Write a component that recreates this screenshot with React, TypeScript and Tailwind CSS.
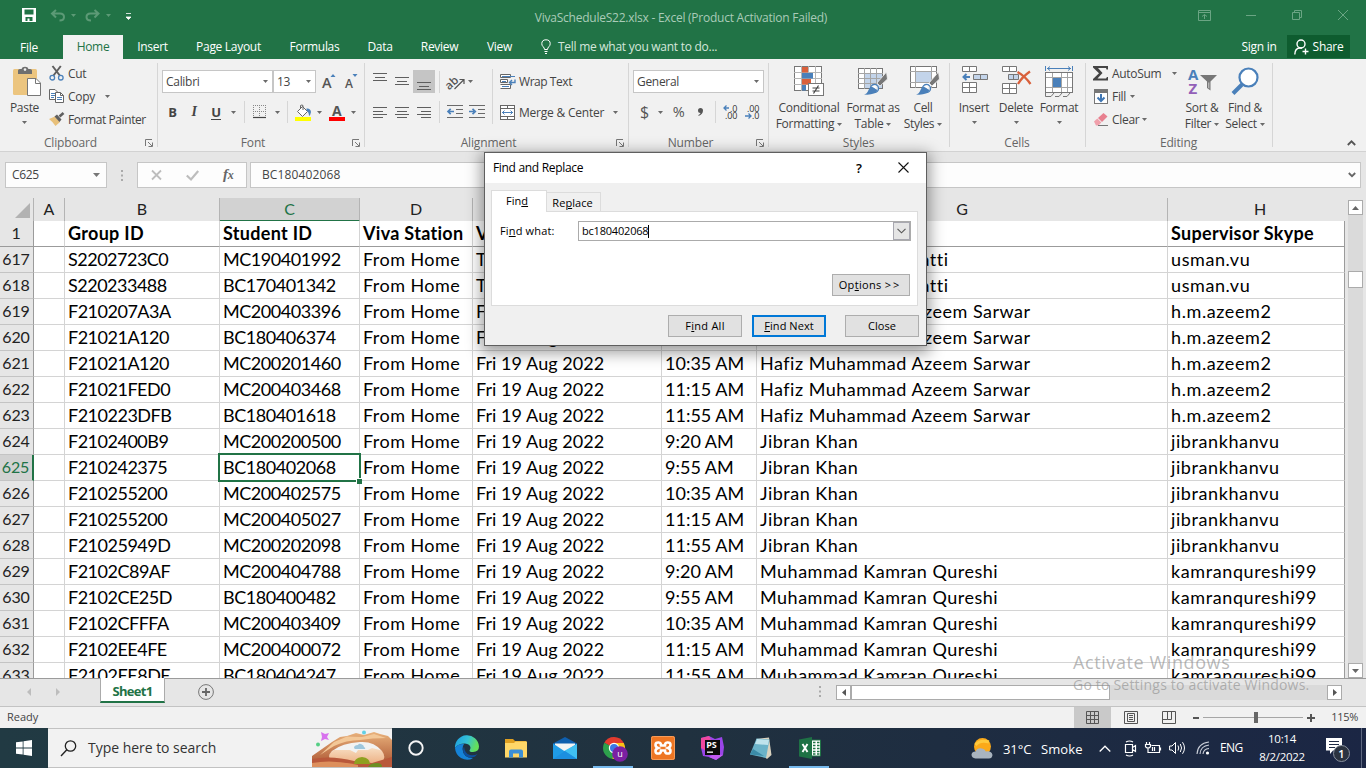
import React from "react";

type Kids = { children?: React.ReactNode };

/* ---------- small shared pieces ---------- */

const Svg = ({ w, h, className = "", children }: Kids & { w: number; h: number; className?: string }) => (
  <svg width={w} height={h} viewBox={`0 0 ${w} ${h}`} className={`block shrink-0 overflow-visible tracking-normal ${className}`} fill="none">
    {children}
  </svg>
);

const Caret = ({ className = "" }: { className?: string }) => (
  <Svg w={5} h={3} className={className}>
    <path d="M0 0H5L2.500 3Z" fill="#6a6a6a" />
  </Svg>
);

const Lines = ({ rows, sel = false }: { rows: [number, number, number][]; sel?: boolean }) => (
  <span className={`flex h-[23px] w-[22px] items-center justify-center ${sel ? "bg-[#c5c5c5]" : ""}`}>
    <Svg w={14} h={19}>
      {rows.map(([x, y, w], i) => (
        <rect key={i} x={x} y={y} width={w} height="1" fill="#5f5f5f" />
      ))}
    </Svg>
  </span>
);

const VSep = ({ className = "h-[22px]" }: { className?: string }) => (
  <span className={`w-px shrink-0 bg-[#d6d6d6] ${className}`} />
);

const Launcher = () => (
  <Svg w={8} h={8}>
    <path d="M.5 7V.5H7M3 3L7 7M7.500 3.500V7.500H3.500" stroke="#777" />
  </Svg>
);

const Group = ({ label, width, launcher, children }: Kids & { label: string; width: string; launcher?: boolean }) => (
  <section className={`flex h-[92px] shrink-0 ${width}`}>
    <div className="flex min-w-0 grow flex-col">
      <div className="flex h-[75px]">{children}</div>
      <div className="flex h-[17px] items-center pt-px">
        <span className={`grow text-center tracking-[-0.15px] text-[#666] ${launcher ? "pr-[4px]" : "pr-px"}`}>{label}</span>
        {launcher && (
          <span className="w-3">
            <Launcher />
          </span>
        )}
      </div>
    </div>
    <VSep className="mt-1 h-[84px]" />
  </section>
);

const Big = ({ width, icon, a, b }: { width: string; icon: React.ReactNode; a: string; b?: string }) => (
  <div className={`flex shrink-0 flex-col items-center whitespace-nowrap ${width}`}>
    <div className="flex h-[41px] items-center pt-[4px]">{icon}</div>
    <span className="h-4 leading-4">{a}</span>
    <span className={`flex h-4 items-center gap-[3px] leading-4 ${b ? "" : "pb-[3px]"}`}>
      {b}
      <Caret />
    </span>
  </div>
);

/* ---------- ribbon icons ---------- */

const PasteIcon = () => (
  <Svg w={30} h={31} className="ml-[4px]">
    <rect x="1" y="3" width="24" height="26" rx="1.5" fill="#ecc57f" />
    <path d="M6 8V4.500Q6 3 8 3H9.500Q10 .8 13 .8Q16 .8 16.500 3H18Q20 3 20 4.500V8Z" fill="#6f6f6f" />
    <circle cx="13" cy="3.600" r="1.300" fill="#f1f1f1" />
    <path d="M15.500 12.500H24L28.500 17V29.500H15.500Z" fill="#fff" stroke="#777" />
    <path d="M23.500 12.500V17.500H28.500" stroke="#777" />
  </Svg>
);

const CutIcon = () => (
  <Svg w={16} h={15}>
    <path d="M3.500 0L10.800 9.500M11.800 0L4.500 9.500" stroke="#5f5f5f" strokeWidth="2" />
    <circle cx="3.300" cy="11.700" r="2.300" stroke="#4a80ba" strokeWidth="1.300" />
    <circle cx="11.800" cy="11.700" r="2.300" stroke="#4a80ba" strokeWidth="1.300" />
  </Svg>
);

const CopyIcon = () => (
  <Svg w={16} h={15}>
    <path d="M.5.500H6L8.500 3V10.500H.500Z" fill="#fff" stroke="#666" />
    <path d="M2 4.500H6M2 6.500H6M2 8.500H5" stroke="#4a80ba" />
    <path d="M6.500 3.500H11.500L14.500 6.500V13.500H6.500Z" fill="#fff" stroke="#666" />
    <path d="M11.500 3.500V6.500H14.500" stroke="#666" />
    <path d="M8 8.500H13M8 10.500H13" stroke="#4a80ba" />
  </Svg>
);

const PainterIcon = () => (
  <Svg w={16} h={15}>
    <path d="M0 7L6 4.500L11 10L6.500 14Q4 10 0 7Z" fill="#e8c07a" />
    <path d="M5.500 4.500L8 2.500L12.500 7.500L10.500 10Z" fill="#5f5f5f" />
    <path d="M10.500 4.500L14.500 1" stroke="#5f5f5f" strokeWidth="2.600" />
  </Svg>
);

const CondIcon = () => (
  <Svg w={31} h={31}>
    <rect x=".5" y=".5" width="27" height="24" fill="#fff" stroke="#777" />
    <path d="M7.500 0V25M14.500 0V25M21.500 0V25M0 6.500H28M0 12.500H28M0 18.500H28" stroke="#b5b5b5" />
    <rect x="8" y="1" width="6" height="5.500" fill="#d9603b" />
    <rect x="8" y="7" width="11" height="5.500" fill="#4a80ba" />
    <rect x="8" y="13" width="9" height="5.500" fill="#d9603b" />
    <rect x="8" y="19" width="4" height="5.500" fill="#4a80ba" />
    <rect x="14.500" y="17.500" width="15" height="12" fill="#fff" stroke="#777" />
    <path d="M18.500 22H25.500M18.500 25H25.500M24.500 19.500L19.500 27.500" stroke="#444" strokeWidth="1.200" />
  </Svg>
);

const Brush = () => (
  <>
    <path d="M28.500 6L29.500 13L22 20L19 17Z" fill="#777" stroke="#f1f1f1" strokeWidth=".8" />
    <circle cx="16.500" cy="22.500" r="4" fill="#f1f1f1" stroke="#4a80ba" strokeWidth="1.400" />
    <path d="M6 28.500Q9 28 10.500 24Q12 20 16 20Q17 23 19.500 24Q17 29.500 6 28.500Z" fill="#4a80ba" />
    <path d="M13.500 20.500L17.500 19L18 23Z" fill="#fff" />
  </>
);

const TableIcon = () => (
  <Svg w={30} h={31}>
    <rect x=".5" y="2.500" width="24" height="20" fill="#fff" stroke="#777" />
    <rect x="7" y="8" width="17" height="14" fill="#c3d4ea" />
    <path d="M6.500 2V23M12.500 2V23M18.500 2V23M0 7.500H25M0 12.500H25M0 17.500H25" stroke="#a5a5a5" />
    <Brush />
  </Svg>
);

const CellStyleIcon = () => (
  <Svg w={30} h={31} className="ml-[4px]">
    <rect x=".5" y=".5" width="26" height="21" fill="#fff" stroke="#777" />
    <path d="M5.500 0V22M21.500 0V22M0 5.500H27M0 16.500H27" stroke="#a5a5a5" />
    <rect x="6" y="6" width="15" height="10" fill="#c3d4ea" />
    <Brush />
  </Svg>
);

const InsertIcon = () => (
  <Svg w={27} h={31}>
    <path d="M1.500.500H15.500V5.500H1.500ZM8.500.500V5.500" fill="#fff" stroke="#777" />
    <path d="M12.500 8.500H26.500V13.500H12.500Z" fill="#c3d4ea" stroke="#777" />
    <path d="M19.500 8.500V13.500" stroke="#777" />
    <path d="M9 11H3M5.500 8L2.500 11L5.500 14" stroke="#4a80ba" strokeWidth="2" />
    <path d="M1.500 16.500H15.500V26.500H1.500ZM8.500 16.500V26.500M1.500 21.500H15.500" fill="#fff" stroke="#777" />
  </Svg>
);

const DeleteIcon = () => (
  <Svg w={30} h={31}>
    <path d="M1.500.500H15.500V5.500H1.500ZM8.500.500V5.500" fill="#fff" stroke="#777" />
    <path d="M7.500 8.500H17.500V13.500H7.500Z" fill="#c3d4ea" stroke="#777" />
    <path d="M12.500 8.500V13.500" stroke="#777" />
    <path d="M1.500 17.500H15.500V27.500H1.500ZM8.500 17.500V27.500M1.500 22.500H15.500" fill="#fff" stroke="#777" />
    <path d="M16.500 6Q24 10 29.500 18M29 5.500Q21 11 17 18" stroke="#d9603b" strokeWidth="2.300" />
  </Svg>
);

const FormatIcon = () => (
  <Svg w={30} h={32}>
    <path d="M1.500 0V5M28.500 0V5M3 2.500H27M6 .5L3.500 2.500L6 4.500M24 .5L26.500 2.500L24 4.500" stroke="#4a80ba" />
    <rect x="1.500" y="6.500" width="27" height="20" fill="#fff" stroke="#777" />
    <path d="M8.500 7V26M17.500 7V26M23.500 7V26M2 11.500H28M2 21.500H28" stroke="#a5a5a5" />
    <rect x="9" y="12" width="8" height="9" fill="#4a80ba" />
    <path d="M1.500 26.500V30.500H7L10 27M11 30.500H15L18 27M19 30.500H23L26 27" stroke="#777" />
  </Svg>
);

const SortIcon = () => (
  <Svg w={30} h={30} className="ml-[2px]">
    <text x="0" y="12.500" fontFamily="Open Sans" fontWeight="700" fontSize="15" fill="#4a80ba">A</text>
    <text x="0.500" y="26.500" fontFamily="Open Sans" fontWeight="700" fontSize="15" fill="#9360b8">Z</text>
    <path d="M12 8H29L22.500 14.500V23.500L19 21V14.500Z" fill="#777" />
    <path d="M20.500 15.500V21L21.200 21.500V15.500Z" fill="#f1f1f1" />
  </Svg>
);

const FindIcon = () => (
  <Svg w={29} h={30}>
    <path d="M2 26.500L11 17.500" stroke="#4a80ba" strokeWidth="4" />
    <circle cx="17.500" cy="10.500" r="9" fill="#fff" stroke="#4a80ba" strokeWidth="2.200" />
  </Svg>
);

const Indent = ({ right = false }: { right?: boolean }) => (
  <Svg w={16} h={14}>
    <path d="M0 .5H16M9 4.500H16M9 8.500H16M0 12.500H16" stroke="#6a6a6a" />
    {right ? (
      <path d="M0 6.500H5M3.500 3.800L6.300 6.500L3.500 9.200" stroke="#4a80ba" strokeWidth="1.700" />
    ) : (
      <path d="M2 6.500H7M3.700 3.800L1 6.500L3.700 9.200" stroke="#4a80ba" strokeWidth="1.700" />
    )}
  </Svg>
);

const Combo = ({ text, width, h = "h-[23px]" }: { text: string; width: string; h?: string }) => (
  <div className={`flex shrink-0 items-center justify-between border border-[#c6c6c6] bg-white pr-[4px] pl-[3px] ${width} ${h}`}>
    <span>{text}</span>
    <Caret />
  </div>
);

/* ---------- title + tabs ---------- */

const TitleBar = () => (
  <header className="flex h-[35px] items-center bg-[#217346]">
    <Svg w={14} h={14} className="mt-[-5px] ml-[22px]">
      <path fillRule="evenodd" d="M0 0H14V14H0ZM2.500 1.500V6.500H11.500V1.500ZM3.500 9V13H5.500V10.500H7.500V13H10.500V9Z" fill="#fff" />
    </Svg>
    <Svg w={15} h={13} className="mt-[-5px] ml-[14px]">
      <path d="M6 1L2 4.500L6 8.500M2 4.500H10Q14 4.500 14 8Q14 11.500 9.500 11.500" stroke="#5c9a76" strokeWidth="2" />
    </Svg>
    <Svg w={5} h={3} className="mt-[-5px] ml-[6px]"><path d="M0 0H5L2.500 3Z" fill="#5c9a76" /></Svg>
    <Svg w={15} h={13} className="mt-[-5px] ml-[9px]">
      <path d="M9.500 1L13.500 4.500L9.500 8.500M13.500 4.500H5.500Q1.500 4.500 1.500 8Q1.500 11.500 6 11.500" stroke="#5c9a76" strokeWidth="2" />
    </Svg>
    <Svg w={5} h={3} className="mt-[-5px] ml-[6px]"><path d="M0 0H5L2.500 3Z" fill="#5c9a76" /></Svg>
    <Svg w={5} h={7} className="mt-[-2px] ml-[15px]"><path d="M0 .5H5M0 4H5L2.500 6.500Z" fill="#fff" stroke="#fff" strokeWidth=".8" /></Svg>
    <span className="ml-[402px] w-[296px] text-center whitespace-nowrap text-[#a9cbb8] tracking-[-0.24px]">
      VivaScheduleS22.xlsx - Excel (Product Activation Failed)
    </span>
    <Svg w={13} h={11} className="mt-[-5px] ml-[369px]">
      <path d="M.5.500H12.500V10.500H.500ZM.500 2.500H12.500M6.500 9V4.500M4 6.500L6.500 4.500L9 6.500" stroke="#6ba584" />
    </Svg>
    <Svg w={10} h={1} className="mt-[-5px] ml-[35px]"><path d="M0 .5H10" stroke="#6ba584" /></Svg>
    <Svg w={10} h={10} className="mt-[-5px] ml-[36px]"><path d="M.5 2.500H7.500V9.500H.500ZM2.500 2.500V.500H9.500V7.500H7.500" stroke="#6ba584" /></Svg>
    <Svg w={10} h={10} className="mt-[-5px] ml-[36px]"><path d="M0 0L10 10M10 0L0 10" stroke="#6ba584" /></Svg>
  </header>
);

const Tab = ({ t, w, on = false }: { t: string; w: string; on?: boolean }) => (
  <span className={`flex shrink-0 items-center justify-center ${w} ${on ? "bg-[#f1f1f1] text-[#217346]" : "text-white"}`}>{t}</span>
);

const TabBar = () => (
  <nav className="flex h-6 bg-[#217346] whitespace-nowrap">
    <Tab t="File" w="w-[58px] mr-[5px] pt-px" />
    <Tab t="Home" w="w-[60px]" on />
    <Tab t="Insert" w="w-[59px]" />
    <Tab t="Page Layout" w="w-[93px]" />
    <Tab t="Formulas" w="w-[79px]" />
    <Tab t="Data" w="w-[52px]" />
    <Tab t="Review" w="w-[67px]" />
    <Tab t="View" w="w-[53px]" />
    <Svg w={10} h={15} className="mt-[4px] ml-[15px]">
      <path d="M3.500 10.500Q3.500 9 2 7.500Q.8 6.500.8 4.700Q.8.800 5 .8Q9.200.800 9.200 4.700Q9.200 6.500 8 7.500Q6.500 9 6.500 10.500ZM3.500 12.500H6.500M4 14.500H6" stroke="#fff" />
    </Svg>
    <span className="ml-[7px] self-center text-[#d5e7dc] tracking-[-0.27px]">Tell me what you want to do...</span>
    <span className="ml-auto w-[36px] self-center text-center text-white">Sign in</span>
    <span className="mr-[16px] ml-[10px] flex h-[23px] w-[63px] items-center justify-center gap-[4px] bg-[#0e5c2f] text-white">
      <Svg w={15} h={16}>
        <circle cx="7" cy="5" r="4" stroke="#fff" strokeWidth="1.400" />
        <path d="M.8 15.500Q1 9 6 9H8M11.500 9.500V15.500M8.500 12.500H14.500" stroke="#fff" strokeWidth="1.400" />
      </Svg>
      Share
    </span>
  </nav>
);

/* ---------- ribbon ---------- */

const Small = ({ icon, children }: Kids & { icon: React.ReactNode }) => (
  <div className="flex h-[23px] items-center whitespace-nowrap">
    <span className="w-[19px] shrink-0">{icon}</span>
    {children}
  </div>
);

const Box = ({ w, children }: Kids & { w: string }) => <span className={`flex shrink-0 items-center justify-center ${w}`}>{children}</span>;

const Ribbon = () => (
  <div className="flex h-[93px] border-b border-[#d2d2d2] bg-[#f1f1f1] text-[#444]">
    <Group label="Clipboard" width="w-[158px]" launcher>
      <Big width="w-[49px]" icon={<PasteIcon />} a="Paste" />
      <div className="flex flex-col pt-[3px]">
        <Small icon={<CutIcon />}>Cut</Small>
        <Small icon={<CopyIcon />}>Copy<Caret className="ml-[10px]" /></Small>
        <Small icon={<PainterIcon />}><span className="tracking-[-0.42px]">Format Painter</span></Small>
      </div>
    </Group>

    <Group label="Font" width="w-[207px]" launcher>
      <div className="flex flex-col gap-[8px] pt-[11px] pl-[4px]">
        <div className="flex h-[23px]">
          <Combo text="Calibri" width="w-[111px]" />
          <Combo text="13" width="w-[43px]" />
          <Box w="w-[26px]">
            <Svg w={14} h={15}>
              <text x="0" y="13.500" fontFamily="Open Sans" fontWeight="600" fontSize="14.500" fill="#555">A</text>
              <path d="M8.500 3H13.500L11 0Z" fill="#4a80ba" />
            </Svg>
          </Box>
          <Box w="w-[18px]">
            <Svg w={13} h={15}>
              <text x="0" y="13.500" fontFamily="Open Sans" fontWeight="600" fontSize="12" fill="#555">A</text>
              <path d="M7.500 0H12.500L10 3Z" fill="#4a80ba" />
            </Svg>
          </Box>
        </div>
        <div className="flex h-[22px] items-center text-[#444]">
          <Box w="w-[21px]"><b className="text-[13px]">B</b></Box>
          <Box w="w-[22px]"><i className="font-['Liberation_Serif',serif] text-[14px] font-bold">I</i></Box>
          <Box w="w-[22px]"><b className="border-b border-[#444] text-[13px] leading-[14px]">U</b></Box>
          <Box w="w-[13px]"><Caret /></Box>
          <VSep className="ml-[4px] h-[22px]" />
          <Box w="w-[30px]">
            <Svg w={14} h={14}>
              <path d="M.5 0V12M6.500 0V12M12.500 0V12M0 .5H13M0 6.500H13" stroke="#888" strokeDasharray="1 1" />
              <path d="M0 12.500H13" stroke="#444" strokeWidth="1.200" />
            </Svg>
          </Box>
          <Box w="w-[5px]"><Caret /></Box>
          <VSep className="ml-[7px] h-[22px]" />
          <Box w="w-[31px]">
            <Svg w={17} h={17}>
              <path d="M2.500 7.500L7.500 2.500L12.500 7.500L7.500 12.500Z" fill="#fff" stroke="#666" />
              <path d="M5.500 5V1.500Q7 .5 8 1.500V6" stroke="#666" />
              <path d="M11.500 4.500Q15.500 4 16 8Q15.500 11 14 12Q14 8 11.500 6.500Z" fill="#4a80ba" />
              <rect x="0" y="13" width="16" height="4" fill="#ff0" />
            </Svg>
          </Box>
          <Caret className="-ml-[2px] mr-[1px]" />
          <Box w="w-[28px]">
            <Svg w={16} h={17} className="ml-[-1px]">
              <text x="3" y="12" fontFamily="Open Sans" fontWeight="700" fontSize="14" fill="#555">A</text>
              <rect x="0" y="13" width="16" height="4" fill="red" />
            </Svg>
          </Box>
          <Caret />
        </div>
      </div>
    </Group>

    <Group label="Alignment" width="w-[264px]" launcher>
      <div className="flex w-[127px] flex-col gap-[8px] pt-[11px] pl-[4px]">
        <div className="flex h-[23px] items-center">
          <Lines rows={[[0, 1, 14], [2, 5, 10], [0, 8, 14]]} />
          <Lines rows={[[0, 5, 14], [2, 9, 10], [0, 12, 14]]} />
          <Lines sel rows={[[0, 10, 14], [2, 14, 10], [0, 17, 14]]} />
          <VSep className="ml-[4px] h-[22px]" />
          <Box w="w-[33px]">
            <Svg w={18} h={16}>
              <text x="-3" y="12" transform="rotate(-42 5 9)" fontFamily="Open Sans" fontWeight="600" fontSize="11.500" fill="#555">ab</text>
              <path d="M6.500 15L15.500 6M11.500 5.500H16V10" stroke="#555" strokeWidth="1.200" />
            </Svg>
          </Box>
          <Caret className="ml-[-5px]" />
        </div>
        <div className="flex h-[22px] items-center">
          <Lines rows={[[0, 4, 14], [0, 8, 10], [0, 11, 14], [0, 14, 10]]} />
          <Lines rows={[[0, 4, 14], [2, 8, 10], [0, 11, 14], [2, 14, 10]]} />
          <Lines rows={[[0, 4, 14], [4, 8, 10], [0, 11, 14], [4, 14, 10]]} />
          <VSep className="ml-[4px] h-[22px]" />
          <Box w="w-[30px]"><Indent /></Box>
          <Box w="w-[14px]"><Indent right /></Box>
        </div>
      </div>
      <VSep className="mt-[10px] h-[55px]" />
      <div className="flex flex-col gap-[8px] pt-[11px] pl-[7px] whitespace-nowrap">
        <div className="flex h-[23px] items-center gap-[3px]">
          <Svg w={16} h={16}>
            <path d="M.5.500H10.500V3.500H.500ZM.500 5.500H7.500V8.500H.500ZM.500 10.500H10.500V14.500H.500" stroke="#666" fill="#fff" />
            <path d="M2 2.500H15M2 7.500H6M2 12.500H9" stroke="#4a80ba" />
            <path d="M15 5.500V8.500H10M12 6L9.500 8.500L12 11" stroke="#4a80ba" strokeWidth="1.400" />
          </Svg>
          <span className="tracking-[-0.45px]">Wrap Text</span>
        </div>
        <div className="flex h-[22px] items-center gap-[3px]">
          <Svg w={16} h={15}>
            <rect x=".5" y=".5" width="14" height="14" fill="#fff" stroke="#666" />
            <path d="M0 3.500H15M0 11.500H15M7.500 0V3.500M7.500 11.500V15" stroke="#666" />
            <path d="M2 7.500H13M4.500 5.500L2.500 7.500L4.500 9.500M10.500 5.500L12.500 7.500L10.500 9.500" stroke="#4a80ba" />
          </Svg>
          <span className="pt-[2px] tracking-[-0.22px]">Merge &amp; Center</span>
          <Caret className="ml-[6px]" />
        </div>
      </div>
    </Group>

    <Group label="Number" width="w-[140px]" launcher>
      <div className="flex flex-col gap-[8px] pt-[11px] pl-[4px]">
        <Combo text="General" width="w-[131px]" />
        <div className="flex h-[22px] items-center text-[#555]">
          <Box w="w-[23px]"><span className="text-[16px]">$</span></Box>
          <Box w="w-[9px]"><Caret /></Box>
          <Box w="w-[27px]"><span className="text-[14.500px]">%</span></Box>
          <Box w="w-[16px]">
            <Svg w={5} h={8}><path d="M0 2.500A2.500 2.500 0 0 1 5 2.500Q5 6 .5 8V7Q2.500 6 2.500 5A2.500 2.500 0 0 1 0 2.500Z" fill="#555" /></Svg>
          </Box>
          <VSep className="ml-[7px] h-[22px]" />
          <Svg w={16} h={15} className="ml-[7px]">
            <path d="M6 3H1M3.500.500L1 3L3.500 5.500" stroke="#4a80ba" strokeWidth="1.300" />
            <text x="7" y="6.500" fontFamily="Open Sans" fontSize="9" textLength="7.500" fill="#333">.0</text>
            <text x="2" y="14" fontFamily="Open Sans" fontSize="9" textLength="12.500" fill="#333">.00</text>
          </Svg>
          <Svg w={16} h={15} className="ml-[6px]">
            <text x="2" y="6.500" fontFamily="Open Sans" fontSize="9" textLength="12.500" fill="#333">.00</text>
            <path d="M0 11H6M3.500 8.500L6 11L3.500 13.500" stroke="#4a80ba" strokeWidth="1.300" />
            <text x="7" y="14" fontFamily="Open Sans" fontSize="9" textLength="7.500" fill="#333">.0</text>
          </Svg>
        </div>
      </div>
    </Group>

    <Group label="Styles" width="w-[181px]">
      <Big width="w-[80px]" icon={<CondIcon />} a="Conditional" b="Formatting" />
      <Big width="w-[48px]" icon={<TableIcon />} a="Format as" b="Table" />
      <Big width="w-[52px]" icon={<CellStyleIcon />} a="Cell" b="Styles" />
    </Group>

    <Group label="Cells" width="w-[136px]">
      <Big width="w-[48px]" icon={<InsertIcon />} a="Insert" />
      <Big width="w-[36px]" icon={<DeleteIcon />} a="Delete" />
      <Big width="w-[50px]" icon={<FormatIcon />} a="Format" />
    </Group>

    <Group label="Editing" width="w-[187px]">
      <div className="flex w-[94px] flex-col pt-[3px] pl-[7px]">
        <Small icon={<Svg w={15} h={15}><path d="M0 0H15V3.500H13.500L13 2H5L9.500 7L4.500 12.500H13L14 11H15V14.500H0V13L6 7.200L0 1.500Z" fill="#444" /></Svg>}>
          AutoSum<Caret className="ml-[11px]" />
        </Small>
        <Small icon={<Svg w={15} h={15} className="ml-px"><rect x=".5" y=".5" width="13" height="14" fill="#fff" stroke="#777" /><path d="M0 0H14V4H0Z" fill="#777" /><path d="M7 5V12M3.500 8.500L7 12L10.500 8.500" stroke="#3f76b3" strokeWidth="2" /></Svg>}>
          Fill<Caret className="ml-[4px]" />
        </Small>
        <Small icon={<Svg w={15} h={14} className="ml-px"><path d="M4 5L9.500 0L13.500 3.500L8 9Z" fill="#e8808f" /><path d="M0 8.500L3.300 5.500L7.300 9.500L4.500 12.500H2Z" fill="#f0a0ab" /><path d="M4 12.500H14" stroke="#777" /></Svg>}>
          Clear<Caret className="ml-[3px]" />
        </Small>
      </div>
      <Big width="w-[44px]" icon={<SortIcon />} a="Sort &amp;" b="Filter" />
      <Big width="w-[42px]" icon={<FindIcon />} a="Find &amp;" b="Select" />
    </Group>

    <Svg w={9} h={6} className="mt-[81px] ml-[74px]"><path d="M.8 5L4.500 1.300L8.200 5" stroke="#555" strokeWidth="1.800" /></Svg>
  </div>
);

/* ---------- formula bar ---------- */

const Dots = ({ className = "" }: { className?: string }) => (
  <Svg w={2} h={11} className={className}><path d="M0 0H2V2H0ZM0 4.500H2V6.500H0ZM0 9H2V11H0Z" fill="#aaa" /></Svg>
);

const FormulaBar = () => (
  <div className="flex h-[46px] items-center bg-[#e6e6e6] pl-[5px] text-[#444]">
    <div className="flex h-[26px] w-[102px] items-center justify-between border border-[#c6c6c6] bg-[#fdfdfd] pr-[6px] pl-[6px]">
      <span className="tracking-[-0.35px]">C625</span>
      <Svg w={7} h={4}><path d="M0 0H7L3.500 4Z" fill="#777" /></Svg>
    </div>
    <Dots className="ml-[14px]" />
    <div className="ml-[14px] flex h-[26px] w-[110px] items-center border border-[#c6c6c6] bg-[#fdfdfd]">
      <Svg w={11} h={10} className="ml-[13px]"><path d="M1 .5L10 9.500M10 .5L1 9.500" stroke="#bdbdbd" strokeWidth="1.800" /></Svg>
      <Svg w={13} h={11} className="ml-[24px]"><path d="M.8 5.500L5 9.500L12.200 1" stroke="#bdbdbd" strokeWidth="2.200" /></Svg>
      <i className="ml-[24px] font-['Liberation_Serif',serif] text-[15px] font-bold text-[#666]">f<span className="text-[12px]">x</span></i>
    </div>
    <div className="ml-[3px] flex h-[26px] w-[1111px] items-center border border-[#c6c6c6] bg-[#fdfdfd] pr-[4px] pl-[11px]">
      <span className="tracking-[0.12px]">BC180402068</span>
      <Svg w={8} h={6} className="ml-auto"><path d="M.8 1L4 4.200L7.200 1" stroke="#666" strokeWidth="1.800" /></Svg>
    </div>
  </div>
);

/* ---------- sheet ---------- */

const cols = "grid grid-cols-[34px_31px_155px_140px_113px_189px_95px_411px_177px]";

const data: string[][] = [
  ["617", "", "S2202723C0", "MC190401992", "From Home", "Thu 18 Aug 2022", "", "Bhatti", "usman.vu"],
  ["618", "", "S220233488", "BC170401342", "From Home", "Thu 18 Aug 2022", "", "Bhatti", "usman.vu"],
  ["619", "", "F210207A3A", "MC200403396", "From Home", "Fri 19 Aug 2022", "9:20 AM", "Hafiz Muhammad Azeem Sarwar", "h.m.azeem2"],
  ["620", "", "F21021A120", "BC180406374", "From Home", "Fri 19 Aug 2022", "9:55 AM", "Hafiz Muhammad Azeem Sarwar", "h.m.azeem2"],
  ["621", "", "F21021A120", "MC200201460", "From Home", "Fri 19 Aug 2022", "10:35 AM", "Hafiz Muhammad Azeem Sarwar", "h.m.azeem2"],
  ["622", "", "F21021FED0", "MC200403468", "From Home", "Fri 19 Aug 2022", "11:15 AM", "Hafiz Muhammad Azeem Sarwar", "h.m.azeem2"],
  ["623", "", "F210223DFB", "BC180401618", "From Home", "Fri 19 Aug 2022", "11:55 AM", "Hafiz Muhammad Azeem Sarwar", "h.m.azeem2"],
  ["624", "", "F2102400B9", "MC200200500", "From Home", "Fri 19 Aug 2022", "9:20 AM", "Jibran Khan", "jibrankhanvu"],
  ["625", "", "F210242375", "BC180402068", "From Home", "Fri 19 Aug 2022", "9:55 AM", "Jibran Khan", "jibrankhanvu"],
  ["626", "", "F210255200", "MC200402575", "From Home", "Fri 19 Aug 2022", "10:35 AM", "Jibran Khan", "jibrankhanvu"],
  ["627", "", "F210255200", "MC200405027", "From Home", "Fri 19 Aug 2022", "11:15 AM", "Jibran Khan", "jibrankhanvu"],
  ["628", "", "F21025949D", "MC200202098", "From Home", "Fri 19 Aug 2022", "11:55 AM", "Jibran Khan", "jibrankhanvu"],
  ["629", "", "F2102C89AF", "MC200404788", "From Home", "Fri 19 Aug 2022", "9:20 AM", "Muhammad Kamran Qureshi", "kamranqureshi99"],
  ["630", "", "F2102CE25D", "BC180400482", "From Home", "Fri 19 Aug 2022", "9:55 AM", "Muhammad Kamran Qureshi", "kamranqureshi99"],
  ["631", "", "F2102CFFFA", "MC200403409", "From Home", "Fri 19 Aug 2022", "10:35 AM", "Muhammad Kamran Qureshi", "kamranqureshi99"],
  ["632", "", "F2102EE4FE", "MC200400072", "From Home", "Fri 19 Aug 2022", "11:15 AM", "Muhammad Kamran Qureshi", "kamranqureshi99"],
  ["633", "", "F2102EE8DE", "BC180404247", "From Home", "Fri 19 Aug 2022", "11:55 AM", "Muhammad Kamran Qureshi", "kamranqureshi99"],
];

const tracks = [
  "",
  "",
  "tracking-[-0.5px]",
  "tracking-[-0.45px]",
  "tracking-[0.45px]",
  "tracking-[0.05px]",
  "tracking-[0px]",
  "tracking-[0.5px]",
  "tracking-[0.6px]",
];

const Row = ({ cells, head = false }: { cells: string[]; head?: boolean }) => {
  const active = cells[0] === "625";
  return (
    <div className={`${cols} h-[26px] shrink-0`}>
      {cells.map((c, i) => {
        if (i === 0)
          return (
            <div
              key={i}
              className={`flex items-center justify-center border-b pr-px font-['Lato','Noto_Sans',sans-serif] text-[16px] tracking-[-0.1px] ${
                active
                  ? "border-r-2 border-r-[#217346] bg-[#d2d2d2] text-[#217346]"
                  : "border-r border-r-[#9b9b9b] bg-[#e6e6e6] text-[#222]"
              } ${head ? "border-b-[#9b9b9b]" : "border-b-[#c4c4c4]"}`}
            >
              {c}
            </div>
          );
        const sel = active && i === 3;
        return (
          <div
            key={i}
            className={`flex items-center border-r border-b bg-white pl-[3px] whitespace-nowrap text-black ${
              head ? "border-b-[#9b9b9b] font-bold tracking-[0.3px]" : `border-b-[#d4d4d4] ${tracks[i]}`
            } ${i === 8 ? "border-r-[#9b9b9b]" : "border-r-[#d4d4d4]"} ${sel ? "relative z-10" : ""}`}
          >
            <span className={c === "Bhatti" ? "ml-[138px]" : ""}>{c}</span>
            {sel && (
              <>
                <span className="absolute -top-[2px] -left-[2px] h-[29px] w-[143px] border-2 border-[#217346]" />
                <span className="absolute -right-[3px] -bottom-[4px] size-[6px] border-t border-l border-white bg-[#217346]" />
              </>
            )}
          </div>
        );
      })}
    </div>
  );
};

const Sheet = () => (
  <div className="flex h-[480px] bg-[#e6e6e6]">
    <div className="flex h-[480px] w-[1345px] flex-col overflow-hidden font-['Lato','Noto_Sans',sans-serif] text-[18px] tracking-normal [font-variant-ligatures:none]">
      <div className={`${cols} h-[23px] shrink-0 text-[16px] text-[#222]`}>
        {["", "A", "B", "C", "D", "E", "F", "G", "H"].map((c, i) => (
          <div
            key={i}
            className={`flex items-center justify-center border-r ${
              i === 3 ? "border-b-2 border-b-[#217346] bg-[#d2d2d2] pt-px text-[#217346]" : "border-b border-b-[#9b9b9b]"
            } ${i === 8 ? "border-r-transparent pl-[8px]" : "border-r-[#b4b4b4]"}`}
          >
            {i === 0 ? <Svg w={15} h={15} className="mt-[2px] ml-[11px]"><path d="M15 0V15H0Z" fill="#b2b2b2" /></Svg> : c}
          </div>
        ))}
      </div>
      <Row head cells={["1", "", "Group ID", "Student ID", "Viva Station", "Viva Date", "Time", "Supervisor", "Supervisor Skype"]} />
      {data.map((r) => (
        <Row key={r[0]} cells={r} />
      ))}
    </div>
    <div className="mt-[2px] ml-[3px] flex h-[478px] w-[15px] flex-col bg-[#dadada]">
      <span className="flex h-[15px] items-center justify-center border border-[#ababab] bg-white"><Svg w={7} h={4}><path d="M0 4H7L3.500 0Z" fill="#666" /></Svg></span>
      <span className="mt-[56px] h-[17px] border border-[#ababab] bg-white" />
      <span className="mt-auto flex h-[15px] items-center justify-center border border-[#ababab] bg-white"><Svg w={7} h={4}><path d="M0 0H7L3.500 4Z" fill="#666" /></Svg></span>
    </div>
  </div>
);

const SheetTabs = () => (
  <div className="flex h-[29px] border-t border-b border-t-[#9b9b9b] border-b-[#c3c3c3] bg-[#e6e6e6]">
    <Svg w={4} h={8} className="mt-[9px] ml-[27px]"><path d="M4 0V8L0 4Z" fill="#bdbdbd" /></Svg>
    <Svg w={4} h={8} className="mt-[9px] ml-[25px]"><path d="M0 0V8L4 4Z" fill="#bdbdbd" /></Svg>
    <div className="-mt-px ml-[40px] flex h-[25px] w-[65px] items-center justify-center border-x border-b-2 border-x-[#ababab] border-b-[#217346] bg-white pt-[3px] text-[13px] font-bold tracking-[-0.65px] text-[#217346]">
      Sheet1
    </div>
    <Svg w={16} h={16} className="mt-[5px] ml-[33px]">
      <circle cx="8" cy="8" r="7.400" stroke="#777" />
      <path d="M8 4V12M4 8H12" stroke="#666" strokeWidth="1.800" />
    </Svg>
    <Dots className="mt-[7px] ml-[605px]" />
    <div className="mt-[6px] ml-[15px] flex h-[15px] w-[506px] bg-[#dadada]">
      <span className="flex w-[15px] items-center justify-center border border-[#ababab] bg-white"><Svg w={4} h={7}><path d="M4 0V7L0 3.500Z" fill="#555" /></Svg></span>
      <span className="w-[259px] border border-[#ababab] bg-white" />
      <span className="ml-auto flex w-[15px] items-center justify-center border border-[#ababab] bg-white"><Svg w={4} h={7}><path d="M0 0V7L4 3.500Z" fill="#555" /></Svg></span>
    </div>
  </div>
);

const StatusBar = () => (
  <div className="flex h-[21px] items-center bg-[#f1f1f1] text-[11px] text-[#444]">
    <span className="ml-[7px] tracking-[0px]">Ready</span>
    <div className="ml-auto flex h-[21px] w-[37px] items-center justify-center bg-[#c9c9c9]">
      <Svg w={13} h={13}><path d="M.5.500H12.500V12.500H.500ZM4.500 0V13M8.500 0V13M0 4.500H13M0 8.500H13" stroke="#555" /></Svg>
    </div>
    <Svg w={14} h={13} className="ml-[13px]"><path d="M.5.500H13.500V12.500H.500ZM3.500 2.500H10.500V10.500H3.500ZM5 4.500H9M5 6.500H9M5 8.500H9" stroke="#555" /></Svg>
    <Svg w={14} h={13} className="ml-[24px]"><path d="M.5.500H13.500V12.500H.500ZM5.500 0V8.500H9.500M.5 8.500H5.500M9.500 0V8.500" stroke="#555" /></Svg>
    <span className="ml-[17px] h-[2px] w-[6px] bg-[#555]" />
    <span className="ml-[4px] flex h-[11px] w-[100px] items-center"><span className="h-px w-[51px] bg-[#a6a6a6]" /><span className="h-[11px] w-[4px] bg-[#666]" /><span className="h-px grow bg-[#a6a6a6]" /></span>
    <Svg w={8} h={8} className="ml-[4px]"><path d="M4 0V8M0 4H8" stroke="#555" strokeWidth="2" /></Svg>
    <span className="mr-[8px] ml-[16px] w-[27px] text-right tracking-[-0.3px]">115%</span>
  </div>
);

/* ---------- dialog ---------- */

const Btn = ({ children, className = "" }: Kids & { className?: string }) => (
  <span className={`flex h-[22px] items-center justify-center bg-[#e1e1e1] ${className}`}>{children}</span>
);

const Dialog = () => (
  <div className="absolute top-[152px] left-[484px] z-20 flex h-[194px] w-[443px] flex-col border border-[#5f5f5f] bg-[#f0f0f0] text-[11px] tracking-[0.05px] text-black shadow-[0_4px_14px_3px_rgba(0,0,0,0.38)]">
    <div className="flex h-[30px] shrink-0 items-center bg-white pl-[8px]">
      <span className="grow text-[12px] tracking-[-0.32px]">Find and Replace</span>
      <span className="mr-[36px] text-[13px] font-semibold">?</span>
      <Svg w={11} h={11} className="mt-[-2px] mr-[17px]"><path d="M.5.500L10.500 10.500M10.500.500L.5 10.500" stroke="#111" strokeWidth="1.100" /></Svg>
    </div>
    <div className="flex h-[28px] shrink-0 items-end pl-[6px]">
      <span className="relative z-10 -mb-px flex h-[22px] w-[56px] items-center justify-center border border-b-0 border-[#dcdcdc] bg-white pr-[4px]">
        <span>Fin<u>d</u></span>
      </span>
      <span className="flex h-[19px] w-[54px] items-center justify-center border border-b-0 border-l-0 border-[#dcdcdc] bg-[#f0f0f0] pt-[2px] pr-[2px]">
        <span>Re<u>p</u>lace</span>
      </span>
    </div>
    <div className="ml-[6px] flex h-[95px] w-[427px] shrink-0 flex-col border border-[#dcdcdc] bg-white pt-[9px] pl-[8px]">
      <div className="flex h-[20px] items-center">
        <span className="w-[78px] tracking-[0.15px]">Fi<u>n</u>d what:</span>
        <div className="flex h-[20px] w-[333px] items-center border border-[#ababab] bg-white pl-[3px]">
          <span className="tracking-[-0.2px]">bc180402068</span>
          <span className="h-[13px] w-px bg-black" />
          <span className="ml-auto flex h-[18px] w-[17px] items-center justify-center border border-[#a8a8b0] bg-[#e5e5e5]">
            <Svg w={9} h={6}><path d="M.5.800L4.500 4.800L8.500.800" stroke="#555" strokeWidth="1.100" /></Svg>
          </span>
        </div>
      </div>
      <Btn className="mt-[33px] mr-[7px] w-[78px] self-end border border-[#adadad] pr-[2px] tracking-[0.3px]"><span>Op<u>t</u>ions <span className="tracking-[2px]">&gt;&gt;</span></span></Btn>
    </div>
    <div className="mt-[9px] flex pl-[183px]">
      <Btn className="w-[74px] border border-[#adadad] tracking-[0.25px]"><span>F<u>i</u>nd All</span></Btn>
      <Btn className="ml-[10px] w-[74px] border-2 border-[#0078d7]"><span><u>F</u>ind Next</span></Btn>
      <Btn className="ml-[19px] w-[74px] border border-[#adadad]">Close</Btn>
    </div>
  </div>
);

/* ---------- taskbar ---------- */

const SearchArt = () => (
  <svg width="80" height="38" viewBox="0 0 80 38" className="ml-auto block shrink-0" fill="none">
    <defs>
      <linearGradient id="rock" x1="0" y1="0" x2="0" y2="1">
        <stop offset="0" stopColor="#e9b27c" />
        <stop offset="1" stopColor="#a9512f" />
      </linearGradient>
      <linearGradient id="mesa" x1="0" y1="0" x2="0" y2="1">
        <stop offset="0" stopColor="#f7dcc0" />
        <stop offset="1" stopColor="#eba878" />
      </linearGradient>
    </defs>
    <path d="M18 24L22 21H38L44 24L46 21H56L60 19L72 22V38H14Z" fill="url(#mesa)" />
    <path d="M0 27L10 20L20 13L28 8L35 7L44 4L52 6L62 3L68 5L76 7L80 11V38H66Q76 30 70 22Q62 12 48 13Q30 14 20 22Q14 28 20 32L16 38H0Z" fill="url(#rock)" />
    <path d="M22 13L35 7.500L50 8L62 5L74 9Q60 9 48 11Q34 11 22 17Q14 22 8 26Z" fill="#f3c898" />
    <path d="M0 30Q20 26 42 32L60 34L80 28V38H0Z" fill="#b9583a" />
    <path d="M0 34Q20 30 46 36V38H0Z" fill="#dd8f5c" />
    <path d="M42 35Q42 29 50 28Q58 29 58 35Z" fill="#8fa01f" />
    <path d="M56 38Q58 34 65 34Q70 34 70 38Z" fill="#6c8f22" />
    <path d="M42 19Q42 16 46 16Q47 14 49 15Q52 16 52 18Q54 19 53 20H43Z" fill="#9ec6dc" />
    <path d="M9 3L13 5L17 4L15 8L17 11L13 10L9 12L10 8Z" fill="#d873ee" />
    <circle cx="52" cy="3.500" r="2" fill="#62d0e4" />
    <circle cx="6" cy="15.500" r="2" fill="#55cf85" />
  </svg>
);

const Task = ({ children, on = false }: Kids & { on?: boolean }) => (
  <span className="flex h-10 w-[49px] shrink-0 flex-col items-center">
    <span className="flex h-[38px] items-center pt-[2px]">{children}</span>
    {on && <span className="h-[2px] w-10 bg-[#76b9ed]" />}
  </span>
);

const Taskbar = () => (
  <footer className="flex h-10 bg-linear-to-r from-[#213a43] via-[#20313f] to-[#1b2644] tracking-normal text-white">
    <span className="flex w-[48px] items-center justify-center">
      <Svg w={16} h={16}><path d="M0 2.300L6.700 1.400V7.600H0ZM7.500 1.300L16 0V7.600H7.500ZM0 8.400H6.700V14.600L0 13.700ZM7.500 8.400H16V16L7.500 14.800Z" fill="#fff" /></Svg>
    </span>
    <div className="flex w-[344px] items-center border-t border-b border-[#c2c2c2] bg-[#f2f2f2] text-[#333]">
      <Svg w={17} h={17} className="ml-[12px]"><circle cx="10.500" cy="6" r="5.200" stroke="#222" strokeWidth="1.300" /><path d="M6.800 9.800L1 16" stroke="#222" strokeWidth="1.400" /></Svg>
      <span className="mt-px ml-[11px] text-[14px] tracking-[-0.03px]">Type here to search</span>
      <SearchArt />
    </div>
    <Task><Svg w={16} h={16} className="mr-[1px]"><circle cx="8" cy="8" r="6.700" stroke="#f5f5f5" strokeWidth="1.900" /></Svg></Task>
    <Task>
      <Svg w={24} h={24} className="ml-[3px]">
        <defs>
          <linearGradient id="eg" x1="0" y1="0" x2="1" y2=".3"><stop offset="0" stopColor="#1b9de2" /><stop offset=".55" stopColor="#35c1d6" /><stop offset="1" stopColor="#64e05a" /></linearGradient>
        </defs>
        <path d="M0 12A12 12 0 0 1 24 10.500Q24 15.500 18 16Q14.500 16 14.500 14.500Q15.500 13 15.500 11.500Q15 8 10 7.500Q3 7.500 0 12Z" fill="url(#eg)" />
        <path d="M0 12Q3 7.500 9 8Q7.500 10 7.500 13Q8 21.500 18 22.300Q12 25.500 6 22Q.5 18.500 0 12Z" fill="#1583d8" />
        <path d="M9 10.500Q6.500 16 11 20Q15 23 20 20.500L22.500 18Q19 20 15 19Q9.500 17.500 9 10.500Z" fill="#0d4f9e" />
      </Svg>
    </Task>
    <Task>
      <Svg w={22} h={19} className="ml-[2px]">
        <path d="M0 0H8L10 2H21V18H0Z" fill="#e0a021" /><path d="M0 4H9L10.500 2.500H22V18.500H0Z" fill="#ffd768" />
        <path d="M4 18.500V12.500Q4 10.500 6 10.500H16Q18 10.500 18 12.500V18.500H14V14.500H8V18.500Z" fill="#3b8fd6" />
      </Svg>
    </Task>
    <Task>
      <Svg w={24} h={22} className="mt-[-1px] ml-[2px]">
        <path d="M0 6.500L12 0L24 6.500V10H0Z" fill="#0f5fae" /><path d="M2 6.500H22V14H2Z" fill="#f4f4f4" />
        <path d="M0 6.500L12 14.500L24 6.500V22H0Z" fill="#1f9be6" /><path d="M24 7V22L11 14Z" fill="#40c0f2" /><path d="M0 22L12 14L24 22Z" fill="#1c8fe0" />
      </Svg>
    </Task>
    <Task on>
      <Svg w={25} h={25} className="mt-[2px] ml-[5px]">
        <path d="M11 11L1.300 5.800A11 11 0 0 1 20.800 6Z" fill="#e33b2e" />
        <path d="M11 11L1.300 5.800A11 11 0 0 0 9.500 21.900L14 14Z" fill="#2da14c" />
        <path d="M11 11V6H20.800A11 11 0 0 1 9.500 21.900Z" fill="#fbc116" />
        <circle cx="11" cy="11" r="5.200" fill="#fff" /><circle cx="11" cy="11" r="4" fill="#3b78e7" />
        <circle cx="17" cy="17" r="7.800" fill="#7b1fa2" />
        <text x="17" y="20" textAnchor="middle" fontFamily="Open Sans" fontSize="9" fill="#fff">u</text>
      </Svg>
    </Task>
    <Task>
      <Svg w={24} h={24} className="ml-[2px]">
        <rect width="24" height="24" rx="2" fill="#ee7623" /><rect x=".5" y=".5" width="23" height="23" rx="2" stroke="#f59c5a" />
        <path d="M8 6.500Q4.500 6 4.500 9Q4.500 11 7 12Q4.500 13 4.500 15Q4.500 18 8 17.500Q10 17.300 10 14.500H14Q14 17.300 16 17.500Q19.500 18 19.500 15Q19.500 13 17 12Q19.500 11 19.500 9Q19.500 6 16 6.500Q14 6.700 14 9.500H10Q10 6.700 8 6.500Z" stroke="#fff" strokeWidth="2.600" />
      </Svg>
    </Task>
    <Task>
      <Svg w={25} h={24} className="ml-[3px]">
        <path d="M1 2L9 0L15 3L22 1L24 11L23 19L16 24L9 21L3 20L1 12Z" fill="#9a45e8" /><path d="M1 2L9 0L12 6L5 14L1 12Z" fill="#f0489f" /><path d="M16 24L9 21L14 18L23 19Z" fill="#c35bf2" />
        <rect x="5" y="4" width="15" height="15" fill="#0a0a0a" />
        <text x="6.200" y="12" fontFamily="Open Sans" fontWeight="700" fontSize="9" fill="#fff">PS</text>
        <rect x="7" y="15.500" width="6" height="1.300" fill="#fff" />
      </Svg>
    </Task>
    <Task>
      <Svg w={22} h={22} className="ml-[2px]">
        <path d="M6 2L19 0.500L21.500 18L17 22L14.500 20Z" fill="#d9d2bf" /><path d="M6.500 1.500L19.500 2.500L16 21L0 17.500Z" fill="#6bb3c9" />
        <path d="M7 2L19 3L18 8L5 7Z" fill="#bfe3ec" /><path d="M3 12L14 19L0 17.500Z" fill="#3b8ba8" />
      </Svg>
    </Task>
    <Task on>
      <Svg w={22} h={22} className="ml-[2px]">
        <path d="M11 3H21.500V19H11Z" fill="#fff" stroke="#217346" /><path d="M14 5.500H16.500M18 5.500H20.500M14 8.500H16.500M18 8.500H20.500M14 11.500H16.500M18 11.500H20.500M14 14.500H16.500M18 14.500H20.500M14 17H16.500M18 17H20.500" stroke="#217346" strokeWidth="1.600" />
        <path d="M0 2.500L13 0V22L0 19.500Z" fill="#1e7145" />
        <path d="M3.500 7L8.500 15M8.500 7L3.500 15" stroke="#fff" strokeWidth="1.900" />
      </Svg>
    </Task>

    <div className="ml-auto flex items-center text-[13px]">
      <Svg w={22} h={21}>
        <circle cx="11.500" cy="8.500" r="8.500" fill="#fba919" /><path d="M4.500 7Q9 1.500 18 4" stroke="#ffc93c" strokeWidth="3" />
        <path d="M4.500 20.500Q.5 20 .5 16.500Q1 13.500 4.500 13.500Q6.500 9.500 11 10.500Q14 11 14.800 13.500Q20.500 12.500 21.500 17Q21 20.500 18 20.500Z" fill="#a9b4bf" />
      </Svg>
      <span className="mt-[2px] ml-[10px] w-[30px] tracking-[-0.1px]">31°C</span>
      <span className="mt-[2px] ml-[8px] w-[43px] tracking-[0.1px]">Smoke</span>
      <Svg w={12} h={7} className="ml-[15px]"><path d="M.7 6.500L6 1.200L11.300 6.500" stroke="#fff" strokeWidth="1.300" /></Svg>
      <Svg w={12} h={17} className="ml-[13px]"><path d="M1.500 4.500H8.500V12.500H1.500ZM8.500 7.500L11.500 5.500V11.500L8.500 9.500M2 2Q5.500 0 9 2M2 15Q5.500 17 9 15" stroke="#fff" strokeWidth="1.200" /></Svg>
      <Svg w={17} h={13} className="ml-[9px]"><path d="M6.500 3.500H14.500V10.500H4.500M15.500 5.500V8.500M1.500 0V2.500M4.500 0V2.500M.5 2.500H5.500V4.500Q5 6 3 6Q1 6 .5 4.500ZM3 6V10.500H5M7.500 5V9M9.500 5V9" stroke="#fff" strokeWidth="1.200" /></Svg>
      <Svg w={17} h={14} className="ml-[7px]"><path d="M.6 5H3L6.500 1.500V12.500L3 9H.6ZM9 4.500Q10.500 7 9 9.500M11.300 3Q13.800 7 11.300 11M13.500 1.200Q17.500 7 13.500 12.800" stroke="#fff" /></Svg>
      <Svg w={14} h={14} className="ml-[10px]"><path d="M1 13Q1.500 2.500 13 1M4 13Q4.500 5 13 4M7 13Q7.500 8 13 7.500" stroke="#c9ced8" strokeWidth="1.100" /><circle cx="11.500" cy="12" r="1.600" fill="#fff" /></Svg>
      <span className="ml-[10px] w-[25px] text-[12px] tracking-[-0.6px]">ENG</span>
      <span className="ml-[13px] flex w-[48px] flex-col items-center text-[11.5px] leading-[18px] tracking-[-0.3px]">
        <span>10:14</span>
        <span>8/2/2022</span>
      </span>
      <Svg w={26} h={26} className="mt-[5px] ml-[20px]">
        <path d="M0 0H16V12.500H7L4 16V12.500H0Z" fill="#fff" /><path d="M3 3.500H13M3 6.500H13M3 9.500H9" stroke="#1f2b45" />
        <circle cx="15.500" cy="15.500" r="8" fill="#2b3340" stroke="#8b93a0" />
        <text x="15.500" y="19.500" textAnchor="middle" fontFamily="Open Sans" fontWeight="600" fontSize="11" fill="#fff">1</text>
      </Svg>
      <span className="mr-[4px] ml-[9px] h-10 w-px bg-[#5e6880]" />
    </div>
  </footer>
);

export default function App() {
  return (
    <div className="relative h-[768px] w-[1366px] overflow-hidden bg-[#e6e6e6] font-['Open_Sans','Noto_Sans',sans-serif] text-[12px] leading-[1.3] tracking-[-0.3px]">
      <TitleBar />
      <TabBar />
      <Ribbon />
      <FormulaBar />
      <Sheet />
      <SheetTabs />
      <StatusBar />
      <Taskbar />
      <Dialog />
      <div className="pointer-events-none absolute top-[650px] left-[1073px] flex flex-col whitespace-nowrap text-[#8a8a8a]/60">
        <span className="text-[18px] leading-[25px] tracking-[0.6px]">Activate Windows</span>
        <span className="text-[14px] leading-[20px] tracking-[0.2px]">Go to Settings to activate Windows.</span>
      </div>
    </div>
  );
}
